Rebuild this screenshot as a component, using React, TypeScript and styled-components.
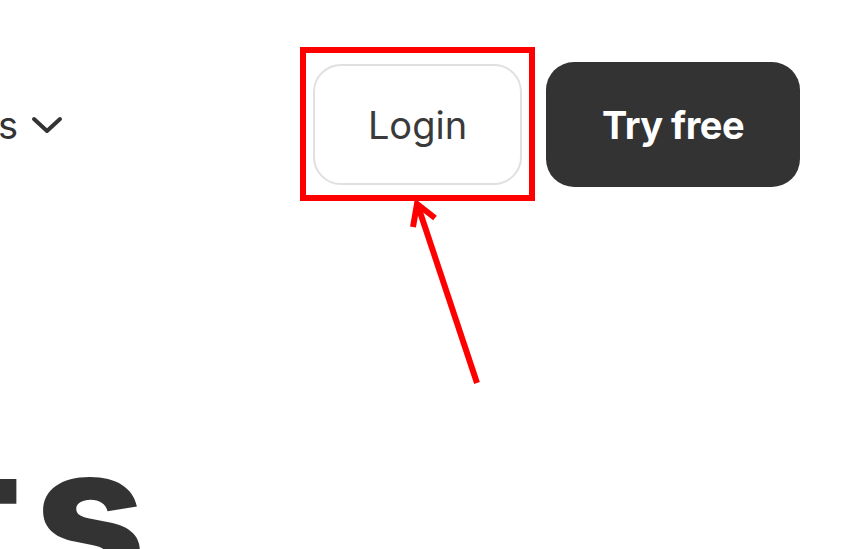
import React from "react";
import styled, { createGlobalStyle } from "styled-components";

const Global = createGlobalStyle`
  html, body { margin: 0; padding: 0; background: #ffffff; }
  body { width: 860px; height: 549px; overflow: hidden; font-family: Inter, "Liberation Sans", sans-serif; }
  #root { position: relative; width: 860px; height: 549px; overflow: hidden; }
`;

const Page = styled.div`
  display: flex;
  flex-direction: column;
  width: 860px;
  height: 549px;
`;

const Header = styled.header`
  display: flex;
  align-items: center;
  justify-content: space-between;
  padding: 62px 60px 0 0;
`;

const NavItem = styled.div`
  display: flex;
  align-items: center;
  gap: 13px;
  margin-left: -2px;
  font-size: 38px;
  color: #333333;
  line-height: 1;
`;

const Actions = styled.div`
  display: flex;
  align-items: center;
  gap: 24px;
`;

const Button = styled.button<{ $primary?: boolean }>`
  display: flex;
  align-items: center;
  justify-content: center;
  box-sizing: border-box;
  width: ${(p) => (p.$primary ? 254 : 209)}px;
  height: ${(p) => (p.$primary ? 125 : 121)}px;
  border-radius: 28px;
  border: ${(p) => (p.$primary ? "none" : "2px solid #e0e0e0")};
  background: ${(p) => (p.$primary ? "#333333" : "#ffffff")};
  color: ${(p) => (p.$primary ? "#ffffff" : "#3a3a3a")};
  font-family: Inter, "Liberation Sans", sans-serif;
  font-size: 38px;
  font-weight: ${(p) => (p.$primary ? 700 : 400)};
  letter-spacing: ${(p) => (p.$primary ? "-0.5px" : "0")};
  padding: 0;
`;

const Hero = styled.h1`
  margin: 230px 0 0 -52px;
  font-family: Inter, "Liberation Sans", sans-serif;
  font-size: 195px;
  font-weight: 800;
  line-height: 1;
  color: #333333;
  letter-spacing: 13px;
  white-space: nowrap;
`;

const Overlay = styled.svg`
  position: absolute;
  left: 0;
  top: 0;
  pointer-events: none;
`;

export default function App() {
  return (
    <>
      <Global />
      <Page>
        <Header>
          <NavItem>
            <span>s</span>
            <svg width="32" height="18" viewBox="0 0 32 18">
              <polyline
                points="3,3 16,15 29,3"
                fill="none"
                stroke="#333"
                strokeWidth="4"
                strokeLinecap="round"
                strokeLinejoin="round"
              />
            </svg>
          </NavItem>
          <Actions>
            <Button>Login</Button>
            <Button $primary>Try free</Button>
          </Actions>
        </Header>
        <Hero>ts</Hero>
      </Page>
      <Overlay width="860" height="549" viewBox="0 0 860 549">
        <rect x="303" y="50" width="229" height="148" fill="none" stroke="#ff0000" strokeWidth="6" />
        <line x1="477" y1="383" x2="418" y2="206" stroke="#ff0000" strokeWidth="6" />
        <polyline
          points="413,227 417,204 435,218"
          fill="none"
          stroke="#ff0000"
          strokeWidth="6"
          strokeLinejoin="miter"
        />
      </Overlay>
    </>
  );
}
